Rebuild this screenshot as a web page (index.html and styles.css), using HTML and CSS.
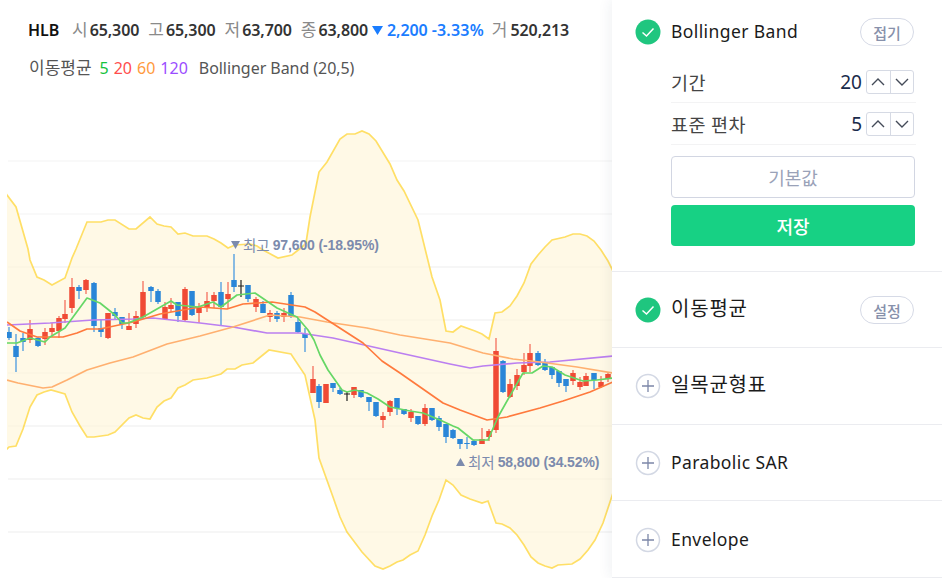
FILE: index.html
```html
<!DOCTYPE html>
<html lang="ko">
<head>
<meta charset="utf-8">
<title>HLB 차트</title>
<link rel="stylesheet" href="styles.css">
</head>
<body>
<div class="page">
  <main class="chart">
    <header class="quote">
      <div class="quote-line">
        <b class="ticker">HLB</b>
        <span class="q"><i>시</i><b>65,300</b></span>
        <span class="q"><i>고</i><b>65,300</b></span>
        <span class="q"><i>저</i><b>63,700</b></span>
        <span class="q"><i>종</i><b>63,800</b></span>
        <span class="change"><svg class="tri" width="11" height="9" viewBox="0 0 11 9"><path d="M0 0H11L5.500 9Z"/></svg><b>2,200</b><b>-3.33%</b></span>
        <span class="q q-vol"><i>거</i><b>520,213</b></span>
      </div>
      <div class="legend">
        <span class="legend-name">이동평균</span>
        <span class="ma5">5</span><span class="ma20">20</span><span class="ma60">60</span><span class="ma120">120</span>
        <span class="legend-bb">Bollinger Band (20,5)</span>
      </div>
    </header>
    <svg class="plot" width="612" height="478" viewBox="0 100 612 478">
      <path class="grid" d="M8 161H612M8 214H612M8 267H612M8 320H612M8 373H612M8 426H612M8 479H612M8 532H612"/>
      <path class="band" d="M0 185L7 195L16 207L28 249L30 260L37 277L44 280L52 285L65 278L72 258L76 249L87 222L101 222L108 220L115 220L129 229L136 229L150 217L157 224L164 226L171 227L178 234L185 233L193 236L207 236L214 239L221 243L228 248L235 245L250 244L257 246L263 250L278 258L292 255L302 247L306 243L310 217L319 172L327 162L340 139L347 134L355 134L362 131L369 134L376 141L390 164L397 180L404 191L418 220L432 277L440 300L446 331L453 332L461 326L475 331L482 334L489 339L495 313L502 312L510 306L517 296L524 283L531 264L538 255L545 247L552 240L565 237L573 234L580 234L587 236L594 241L601 250L608 261L620 285L620 470L613 493L603 523L595 540L588 550L580 559L572 564L558 565L552 568L545 566L538 563L531 557L524 545L517 535L510 528L502 524L496 523L488 501L482 503L470 499L461 495L453 485L446 480L439 500L432 516L425 535L418 551L410 555L403 560L397 562L390 566L383 569L375 566L362 552L353 540L347 532L340 517L333 497L319 458L315 420L305 375L291 354L269 350L253 363L242 365L235 369L227 369L221 374L214 376L207 378L200 379L193 380L185 385L178 388L171 398L164 401L157 407L150 419L143 418L136 415L129 418L115 432L108 435L94 437L87 437L80 426L72 412L65 394L51 390L44 392L37 395L30 407L23 429L16 446L9 447L7 449L0 452Z"/>
      <path class="grid-over" d="M8 267H612M8 320H612M8 373H612M8 426H612M8 479H612M8 532H612"/>
      <path class="wick up" d="M30 320V343M45 328V345M52 323V337M59 316V338M65 300V323M72 278V313M86 279V294M108 313V339M129 313V330M136 311V328M143 281V318M165 302V320M171 298V312M185 287V321M199 303V323M207 292V312M214 292V308M228 282V308M256 297V312M270 310V322M284 308V322M313 366V393M326 384V403M354 387V398M383 412V428M390 400V416M411 409V422M425 404V426M482 428V444M489 429V441M496 338V433M510 379V398M517 369V390M524 353V375M530 344V372M573 370V385M580 377V390M586 373V386M601 376V388M608 373V382"/>
      <path class="wick down" d="M9 327V340M16 334V372M23 333V351M38 337V347M79 285V299M94 282V332M101 319V337M115 308V320M122 317V329M151 286V302M158 289V304M178 302V322M192 291V316M221 282V326M234 254V292M248 285V302M263 301V313M277 311V322M291 292V318M298 318V333M305 328V352M319 384V408M333 383V392M340 388V395M361 390V398M369 397V411M376 402V417M397 398V415M404 409V415M418 416V425M432 408V421M439 416V431M446 424V443M453 429V439M460 439V449M467 437V449M474 440V446M503 360V393M538 351V366M545 359V371M552 367V379M559 371V387M566 379V392M594 373V389"/>
      <path class="body up" d="M30 329V340M45 332V339M52 328V332M59 318V331M65 314V319M72 287V308M86 280V290M108 313V338M129 326V330M136 316V324M143 292V317M165 307V319M171 305V309M185 289V320M199 307V313M207 301V308M214 295V301M228 294V299M256 299V307M270 313V317M284 313V317M313 379V393M326 384V403M354 387V395M383 416V420M390 401V412M411 412V418M425 408V424M482 439V444M489 431V437M496 351V430M510 384V397M517 375V386M524 365V372M530 353V366M573 373V381M580 382V387M586 376V386M601 382V387M608 374V379"/>
      <path class="body down" d="M9 332V338M16 346V357M23 338V342M38 338V346M79 287V291M94 283V326M101 328V332M115 312V316M122 317V324M151 287V291M158 291V302M178 302V316M192 291V315M221 292V307M234 280V287M248 285V299M263 304V313M277 313V319M291 295V317M298 322V332M305 334V338M319 386V402M333 383V388M340 390V394M361 390V397M369 397V402M376 402V416M397 398V408M404 409V414M418 416V424M432 408V420M439 418V427M446 424V437M453 430V438M460 439V444M467 443V444M474 441V445M503 361V392M538 353V365M545 362V370M552 367V375M559 371V383M566 379V386M594 373V380"/>
      <path class="doji" d="M241 280V297M238 286H244M347 392V401M344 394H350"/>
      <path class="line l120" d="M7 325L50 323L93 320L133 319L153 318L200 323L233 327L267 333L300 333L333 338L400 353L450 364L470 368L483 366L517 363L550 362L613 356"/>
      <path class="line l60" d="M7 380L18 383L43 388L52 387L67 380L87 370L110 363L133 357L167 344L200 336L233 327L270 315L300 317L327 322L367 328L400 335L450 343L483 353L513 359L540 362L577 367L613 373"/>
      <path class="line l20" d="M7 322L20 331L37 337L63 337L77 333L87 329L100 329L133 322L160 314L200 307L227 309L243 304L272 302L305 307L315 312L363 343L382 361L400 373L443 403L460 410L487 420L507 417L540 408L563 401L590 392L613 382"/>
      <path class="line l5" d="M7 343L17 343L30 338L45 342L50 337L65 328L87 298L100 303L115 315L122 323L128 323L143 317L171 301L177 305L198 307L213 302L221 307L237 295L255 293L277 308L297 317L308 330L314 340L320 355L328 370L342 390L347 392L355 390L367 393L378 399L390 407L410 411L423 413L440 420L453 426L458 428L473 440L488 440L498 417L515 387L523 373L532 373L543 366L552 367L565 375L583 381L597 380L613 378"/>
    </svg>
    <div class="mark mark-high"><svg class="mark-tri" width="9" height="8" viewBox="0 0 9 8"><path d="M0 0H9L4.500 8Z"/></svg><span>최고</span><b>97,600 (-18.95%)</b></div>
    <div class="mark mark-low"><svg class="mark-tri" width="9" height="8" viewBox="0 0 9 8"><path d="M0 8H9L4.500 0Z"/></svg><span>최저</span><b>58,800 (34.52%)</b></div>
  </main>

  <aside class="panel">
    <section class="row row-open">
      <div class="row-head">
        <svg class="ico" width="26" height="26" viewBox="0 0 26 26"><circle class="ok" cx="13" cy="13" r="12.500"/><path class="tick" d="M7.500 13.500L11.500 17L18.500 9.500"/></svg>
        <span class="name">Bollinger Band</span>
        <button class="pill">접기</button>
      </div>
      <div class="param">
        <span class="param-name">기간</span>
        <span class="param-val">20</span>
        <span class="stepper">
          <span class="step"><svg width="14" height="8" viewBox="0 0 14 8"><path d="M1 7L7 1L13 7"/></svg></span>
          <span class="step"><svg width="14" height="8" viewBox="0 0 14 8"><path d="M1 1L7 7L13 1"/></svg></span>
        </span>
      </div>
      <div class="param">
        <span class="param-name">표준 편차</span>
        <span class="param-val">5</span>
        <span class="stepper">
          <span class="step"><svg width="14" height="8" viewBox="0 0 14 8"><path d="M1 7L7 1L13 7"/></svg></span>
          <span class="step"><svg width="14" height="8" viewBox="0 0 14 8"><path d="M1 1L7 7L13 1"/></svg></span>
        </span>
      </div>
      <button class="btn btn-reset">기본값</button>
      <button class="btn btn-save">저장</button>
    </section>
    <section class="row">
      <div class="row-head">
        <svg class="ico" width="26" height="26" viewBox="0 0 26 26"><circle class="ok" cx="13" cy="13" r="12.500"/><path class="tick" d="M7.500 13.500L11.500 17L18.500 9.500"/></svg>
        <span class="name name-ko">이동평균</span>
        <button class="pill">설정</button>
      </div>
    </section>
    <section class="row">
      <div class="row-head">
        <svg class="ico" width="26" height="26" viewBox="0 0 26 26"><circle class="off" cx="13" cy="13" r="11.500"/><path class="plus" d="M13 7V19M7 13H19"/></svg>
        <span class="name name-ko">일목균형표</span>
      </div>
    </section>
    <section class="row">
      <div class="row-head">
        <svg class="ico" width="26" height="26" viewBox="0 0 26 26"><circle class="off" cx="13" cy="13" r="11.500"/><path class="plus" d="M13 7V19M7 13H19"/></svg>
        <span class="name">Parabolic SAR</span>
      </div>
    </section>
    <section class="row">
      <div class="row-head">
        <svg class="ico" width="26" height="26" viewBox="0 0 26 26"><circle class="off" cx="13" cy="13" r="11.500"/><path class="plus" d="M13 7V19M7 13H19"/></svg>
        <span class="name">Envelope</span>
      </div>
    </section>
  </aside>
</div>
</body>
</html>
```
FILE: styles.css
```css
* { box-sizing: border-box; }
html, body { margin: 0; padding: 0; background: #fff; overflow: hidden; }
body { font-family: "Noto Sans", "Noto Sans CJK KR", sans-serif; color: #222; }
.page { display: flex; width: 942px; height: 578px; }

.chart { position: relative; width: 612px; height: 578px; flex: none; }
.quote { height: 100px; padding: 19px 0 0 28px; }
.quote-line { display: flex; align-items: center; height: 22px; font-size: 16px; line-height: 22px; }
.quote-line b { font-weight: 600; letter-spacing: -.1px; }
.ticker { color: #111; margin-right: 13px; width: 31px; }
.q { display: flex; gap: 2px; margin-right: 9px; color: #333; }
.q-vol { gap: 3px; }
.q i { font-style: normal; font-weight: 400; font-size: 17px; color: #8a8a8a; }
.change { display: flex; align-items: center; color: #1a7dff; margin-right: 8px; margin-left: -5px; }
.change b:first-of-type { margin-left: 4px; margin-right: 4px; }
.change b:last-of-type { letter-spacing: .2px; }
.tri { fill: #1a7dff; }
.legend { display: flex; align-items: center; height: 22px; margin-top: 16px; margin-left: 1px; font-size: 16px; line-height: 22px; color: #555; }
.legend-name { font-size: 17px; margin-right: 8px; }
.ma5 { color: #16c23e; margin-right: 5px; }
.ma20 { color: #ff4d4d; margin-right: 5px; }
.ma60 { color: #ff9a3d; margin-right: 5px; }
.ma120 { color: #9b4dff; margin-right: 11px; }
.legend-bb { color: #555; letter-spacing: -.05px; }

.plot { display: block; clip-path: inset(0 0 0 7px); }
.grid { fill: none; stroke: #f3f3f3; stroke-width: 1; }
.grid-over { fill: none; stroke: rgba(0, 0, 0, .025); stroke-width: 1; }
.band { fill: #fff9e6; stroke: #ffdf66; stroke-width: 1.700; }
.wick, .body, .doji, .line { fill: none; }
.wick { stroke-width: 1.300; }
.body { stroke-width: 5.500; }
.up { stroke: #f04a35; }
.down { stroke: #2a86d8; }
.wick.up { stroke: #f4705f; }
.wick.down { stroke: #4a9ae0; }
.doji { stroke: #222; stroke-width: 1.200; }
.line { stroke-width: 1.700; stroke-linejoin: round; }
.l5 { stroke: #66d766; }
.l20 { stroke: #ff7a3d; }
.l60 { stroke: #ffb070; }
.l120 { stroke: #bb7ff0; }

.mark { position: absolute; display: flex; align-items: center; font-size: 14.500px; line-height: 18px; color: #7c8bad; white-space: nowrap; }
.mark span { margin: 0 3px 0 3px; }
.mark b { font-family: "Liberation Sans", sans-serif; font-size: 14px; font-weight: 700; letter-spacing: -.13px; }
.mark-tri { fill: #7c8bad; }
.mark-high { left: 231px; top: 236px; }
.mark-low { left: 456px; top: 453px; }

.panel { position: relative; width: 330px; height: 578px; flex: none; background: #fff; box-shadow: 0 0 14px rgba(30, 50, 90, .09); }
.row { height: 76.400px; padding: 0 28px 0 23px; border-bottom: 1px solid #ebecf0; }
.row:last-child { padding-top: 1px; }
.row-head { display: flex; align-items: center; height: 76px; }
.row-open { height: 272px; padding-top: 18px; }
.row-open .row-head { height: 28px; margin-bottom: 15px; }
.ico { flex: none; margin-right: 10px; }
.ok { fill: #1fc67f; }
.tick { fill: none; stroke: #fff; stroke-width: 1.500; }
.off { fill: #fff; stroke: #d3d8e4; stroke-width: 1.500; }
.plus { fill: none; stroke: #7c87a8; stroke-width: 1.300; }
.name { flex: 1; font-size: 17.500px; line-height: 24px; color: #1b1b1b; position: relative; top: -1px; letter-spacing: .4px; }
.name-ko { font-size: 20px; letter-spacing: .8px; }
.pill { width: 54px; height: 28px; padding: 0; border: 1.500px solid #d6dae6; border-radius: 14px; background: #fff; color: #8791ab; font: 500 15px "Noto Sans", "Noto Sans CJK KR", sans-serif; }
.param { display: flex; align-items: center; height: 42px; margin-left: 36px; margin-right: -2px; border-bottom: 1px solid #f3f3f4; }
.param-name { flex: 1; font-size: 18.500px; color: #444; letter-spacing: .4px; }
.param-val { font-size: 19px; color: #1a2b4b; margin-right: 4px; }
.stepper { display: flex; width: 48px; height: 24px; margin-right: 2px; border: 1px solid #d6dae4; border-radius: 3px; }
.step { flex: 1; display: flex; align-items: center; justify-content: center; }
.step + .step { border-left: 1px solid #d6dae4; }
.step path { fill: none; stroke: #444b58; stroke-width: 1.400; }
.btn { display: block; width: 244px; margin-left: 36px; padding: 0; border-radius: 4px; font: 400 18px "Noto Sans", "Noto Sans CJK KR", sans-serif; }
.btn-reset { height: 42px; margin-top: 11px; border: 1px solid #d2d6e2; background: #fff; color: #9aa2b8; }
.btn-save { height: 41px; margin-top: 7px; border: 0; background: #17d184; color: #fff; font-weight: 500; }
```
